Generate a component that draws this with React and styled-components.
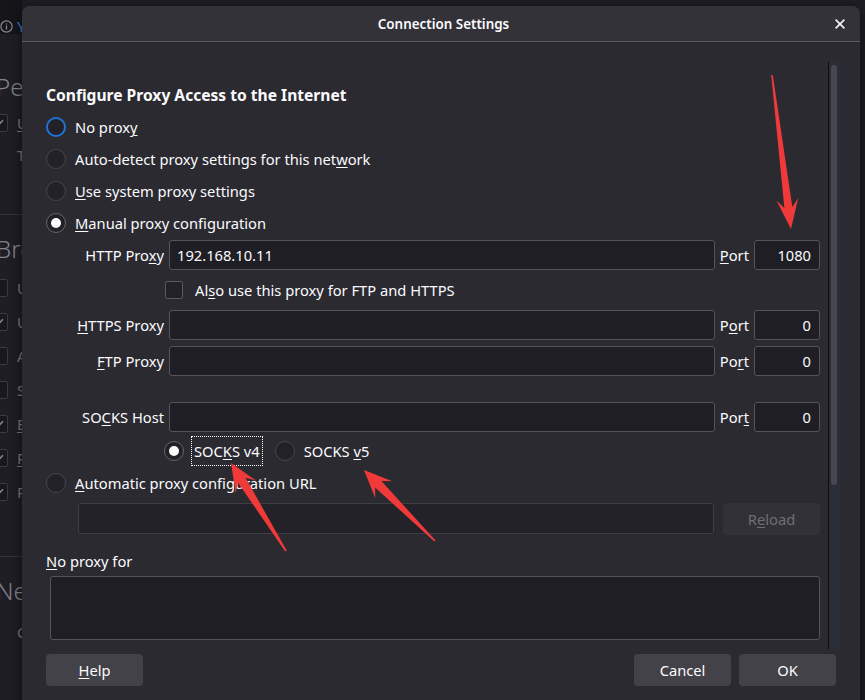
import React from "react";
import styled, { createGlobalStyle } from "styled-components";

const GlobalStyle = createGlobalStyle`
  html, body {
    margin: 0;
    padding: 0;
    background: #1c1b22;
  }
  body {
    font-family: "Noto Sans", "Open Sans", sans-serif;
    color: #fbfbfe;
    overflow: hidden;
  }
`;

const Screen = styled.div`
  position: relative;
  width: 865px;
  height: 700px;
  overflow: hidden;
  background: #1f1e24;
`;

/* ---- settings page behind the dialog (only its left edge shows) ---- */

const InfoBar = styled.div`
  width: 22px;
  height: 34px;
  box-sizing: border-box;
  padding-top: 18px;
  display: flex;
  align-items: center;
  gap: 4px;
  overflow: hidden;
  white-space: nowrap;
  background: #16151a;
  color: #3d7fd0;
  font-size: 15px;
  line-height: 16px;
`;

const Settings = styled.div`
  margin-left: -12px;
  width: 34px;
  overflow: hidden;
  white-space: nowrap;
  display: flex;
  flex-direction: column;
  color: #7a7980;
  font-size: 15px;
`;

const SectionTitle = styled.div`
  margin-top: ${(p) => p.$top}px;
  padding-left: 8px;
  font-size: 24px;
  font-weight: 300;
  line-height: 32px;
  color: #85848b;
`;

const PageCheck = styled.div`
  display: flex;
  align-items: center;
  gap: 9px;
  height: 34px;
  padding-left: 2px;
  margin-top: ${(p) => p.$top || 0}px;
`;

const PageBox = styled.span`
  flex: none;
  width: 18px;
  height: 18px;
  box-sizing: border-box;
  border: 1px solid #3b3a41;
  border-radius: 2px;
  background: #19181d;
  display: flex;
  align-items: center;
  justify-content: center;
`;

const PageNote = styled.div`
  margin-top: ${(p) => p.$top}px;
  padding-left: 29px;
  line-height: 22px;
`;

const Rule = styled.div`
  margin-top: ${(p) => p.$top}px;
  margin-left: 12px;
  height: 1px;
  background: #34333a;
`;

/* ---- dialog ---- */

const Dialog = styled.section`
  position: absolute;
  left: 22px;
  top: 6px;
  width: 838px;
  height: 712px;
  display: flex;
  flex-direction: column;
  background: #2b2a31;
  border-radius: 8px 8px 0 0;
  box-shadow: 0 2px 14px rgba(0, 0, 0, 0.55);
  overflow: hidden;
`;

const TitleBar = styled.header`
  flex: none;
  height: 35px;
  display: grid;
  grid-template-columns: 1fr auto 1fr;
  align-items: center;
  padding: 0 15px 0 20px;
  background: #333239;
  border-bottom: 1px solid #5b5a61;
  font-size: 13.4px;
  font-weight: 600;
`;

const Close = styled.span`
  justify-self: end;
  display: flex;
`;

const Body = styled.div`
  display: flex;
  padding: 20px 20px 0 24px;
`;

const Scroll = styled.div`
  flex: 1;
  height: 587px;
  display: flex;
  gap: 8px;
`;

const Content = styled.div`
  flex: 1;
  display: flex;
  flex-direction: column;
  padding-top: 22px;
  font-size: 14.7px;
`;

const Track = styled.div`
  width: 6px;
  border-left: 1px solid #0d0d10;
  background: #2a2c38;
  padding: 3px 3px 0 2px;
`;

const Thumb = styled.div`
  height: 420px;
  border-radius: 3px;
  background: #46474f;
`;

const Heading = styled.h2`
  margin: 0 0 5px;
  font-size: 15.6px;
  font-weight: 700;
  line-height: 22px;
`;

const RadioRow = styled.div`
  display: flex;
  align-items: center;
  gap: ${(p) => p.$gap || 0}px;
  height: ${(p) => p.$h || 32}px;
  margin-top: ${(p) => p.$top || 0}px;
  padding-left: ${(p) => p.$indent || 0}px;
`;

const Option = styled.label`
  display: inline-flex;
  align-items: center;
  gap: 8px;
`;

const RadioDot = styled.span`
  flex: none;
  width: 20px;
  height: 20px;
  box-sizing: border-box;
  border-radius: 50%;
  border: ${(p) =>
    p.$focus ? "2px solid #1f74d6" : p.$checked ? "1px solid #67666c" : "1px solid #47464d"};
  background: #222127;
  display: flex;
  align-items: center;
  justify-content: center;
  &::after {
    content: "";
    display: ${(p) => (p.$checked ? "block" : "none")};
    width: 10px;
    height: 10px;
    border-radius: 50%;
    background: #fbfbfe;
  }
`;

const Text = styled.span`
  padding: ${(p) => (p.$focus ? "3px 2px" : "0 1px")};
  line-height: 22px;
  white-space: nowrap;
  outline: ${(p) => (p.$focus ? "1px dotted #fbfbfe" : "none")};
`;

const Key = styled.span`
  text-decoration: underline;
  text-decoration-thickness: 1px;
  text-underline-offset: 2px;
`;

const ProxyBlock = styled.div`
  display: flex;
  flex-direction: column;
  margin: 1px 0 0 23px;
`;

const FieldRow = styled.div`
  display: grid;
  grid-template-columns: 95px 1fr auto 66px;
  column-gap: 5px;
  align-items: center;
  height: 30px;
  margin-top: ${(p) => p.$top || 0}px;
`;

const FieldLabel = styled.span`
  text-align: right;
  white-space: nowrap;
`;

const TextBox = styled.input`
  width: 100%;
  height: ${(p) => p.$h || 30}px;
  box-sizing: border-box;
  margin: 0;
  padding: 0 8px 0 7px;
  background: ${(p) => (p.disabled ? "#232228" : "#1f1e24")};
  border: 1px solid ${(p) => (p.disabled ? "#3f3e45" : "#55545b")};
  border-radius: 3px;
  color: #fbfbfe;
  font: 14.7px "Noto Sans", "Open Sans", sans-serif;
  text-align: ${(p) => p.$align || "left"};
  outline: none;
`;

const CheckRow = styled.label`
  display: flex;
  align-items: center;
  gap: 12px;
  height: 40px;
  padding-left: 96px;
`;

const CheckBox = styled.span`
  flex: none;
  width: 18px;
  height: 18px;
  box-sizing: border-box;
  border: 1px solid #5a5960;
  border-radius: 2px;
  background: #222127;
`;

const UrlRow = styled.div`
  display: flex;
  align-items: flex-start;
  gap: 9px;
  margin: 4px 0 0 32px;
`;

const Button = styled.button`
  flex: none;
  width: 97px;
  height: 32px;
  margin: 0;
  padding: 0;
  border: none;
  border-radius: 4px;
  background: ${(p) => (p.disabled ? "#323137" : "#434248")};
  color: ${(p) => (p.disabled ? "#6f6e74" : "#fbfbfe")};
  font: 14.7px "Noto Sans", "Open Sans", sans-serif;
  margin-left: ${(p) => (p.$push ? "auto" : "0")};
`;

const PlainLabel = styled.div`
  margin-top: 15px;
  line-height: 22px;
`;

const TextArea = styled.textarea`
  display: block;
  height: 64px;
  margin: 4px 0 0 4px;
  padding: 4px 7px;
  box-sizing: border-box;
  resize: none;
  background: #1f1e24;
  border: 1px solid #55545b;
  border-radius: 3px;
  color: #fbfbfe;
  font: 14.7px "Noto Sans", "Open Sans", sans-serif;
  outline: none;
`;

const Footer = styled.footer`
  display: flex;
  gap: 8px;
  padding: 5px 24px 0;
`;

const Overlay = styled.svg`
  position: absolute;
  left: 0;
  top: 0;
  pointer-events: none;
`;

function arrow(tail, tip, head = 26, half = 11, neck = 4, thin = 0.8) {
  const dx = tip[0] - tail[0];
  const dy = tip[1] - tail[1];
  const len = Math.hypot(dx, dy);
  const ux = dx / len;
  const uy = dy / len;
  const nx = -uy;
  const ny = ux;
  const bx = tip[0] - ux * head;
  const by = tip[1] - uy * head;
  const kx = tip[0] - ux * head * 0.72;
  const ky = tip[1] - uy * head * 0.72;
  const pts = [
    [tail[0] + nx * thin, tail[1] + ny * thin],
    [kx + nx * neck, ky + ny * neck],
    [bx + nx * half, by + ny * half],
    tip,
    [bx - nx * half, by - ny * half],
    [kx - nx * neck, ky - ny * neck],
    [tail[0] - nx * thin, tail[1] - ny * thin],
  ];
  return pts.map((p) => p.map((v) => v.toFixed(1)).join(",")).join(" ");
}

const Tick = () => (
  <svg width="12" height="12" viewBox="0 0 12 12">
    <path d="M2 6.5l2.6 2.6L10 3.2" fill="none" stroke="#8a898f" strokeWidth="1.5" />
  </svg>
);

const pageChecks = [
  { on: false, label: "Use autoscrolling" },
  { on: true, label: "Use smooth scrolling" },
  { on: false, label: "Always use the cursor keys to navigate within pages" },
  { on: false, label: "Search for text when you start typing" },
  { on: true, label: <><Key>E</Key>nable picture-in-picture video controls</> },
  { on: true, label: <><Key>R</Key>ecommend extensions as you browse</> },
  { on: true, label: "Recommend features as you browse" },
];

export default function App() {
  return (
    <Screen>
      <GlobalStyle />
      <InfoBar>
        <svg width="13" height="13" viewBox="0 0 13 13" style={{ flex: "none" }}>
          <circle cx="6.5" cy="6.5" r="5.6" fill="none" stroke="#8a898f" strokeWidth="1.2" />
          <path d="M6.5 5.6v4M6.5 3.4v1" stroke="#8a898f" strokeWidth="1.3" />
        </svg>
        <span>Your browser is being managed by your organization.</span>
      </InfoBar>
      <Settings>
        <SectionTitle $top={37}>Performance</SectionTitle>
        <PageCheck $top={3}>
          <PageBox>
            <Tick />
          </PageBox>
          <span>
            <Key>U</Key>se recommended performance settings
          </span>
        </PageCheck>
        <PageNote $top={4}>These settings are tailored to your computer’s hardware.</PageNote>
        <Rule $top={48} />
        <SectionTitle $top={18}>Browsing</SectionTitle>
        {pageChecks.map((c, i) => (
          <PageCheck key={i} $top={i === 0 ? 6 : 0}>
            <PageBox>{c.on && <Tick />}</PageBox>
            <span>{c.label}</span>
          </PageCheck>
        ))}
        <Rule $top={47} />
        <SectionTitle $top={18}>Network Settings</SectionTitle>
        <PageNote $top={14}>Configure how Firefox connects to the internet.</PageNote>
      </Settings>

      <Dialog>
        <TitleBar>
          <span />
          <span>Connection Settings</span>
          <Close>
            <svg width="10" height="10" viewBox="0 0 10 10">
              <path d="M0.6 0.6l8.8 8.8M9.4 0.6l-8.8 8.8" stroke="#fbfbfe" strokeWidth="1.5" />
            </svg>
          </Close>
        </TitleBar>

        <Body>
          <Scroll>
            <Content>
              <Heading>Configure Proxy Access to the Internet</Heading>
              <RadioRow $gap={8}>
                <RadioDot $focus />
                <Text>
                  No prox<Key>y</Key>
                </Text>
              </RadioRow>
              <RadioRow $gap={8}>
                <RadioDot />
                <Text>
                  Auto-detect proxy settings for this net<Key>w</Key>ork
                </Text>
              </RadioRow>
              <RadioRow $gap={8}>
                <RadioDot />
                <Text>
                  <Key>U</Key>se system proxy settings
                </Text>
              </RadioRow>
              <RadioRow $gap={8}>
                <RadioDot $checked />
                <Text>
                  <Key>M</Key>anual proxy configuration
                </Text>
              </RadioRow>

              <ProxyBlock>
                <FieldRow>
                  <FieldLabel>
                    HTTP Pro<Key>x</Key>y
                  </FieldLabel>
                  <TextBox defaultValue="192.168.10.11" readOnly />
                  <FieldLabel>
                    <Key>P</Key>ort
                  </FieldLabel>
                  <TextBox defaultValue="1080" $align="right" readOnly />
                </FieldRow>
                <CheckRow>
                  <CheckBox />
                  <span>
                    Al<Key>s</Key>o use this proxy for FTP and HTTPS
                  </span>
                </CheckRow>
                <FieldRow>
                  <FieldLabel>
                    <Key>H</Key>TTPS Proxy
                  </FieldLabel>
                  <TextBox defaultValue="" readOnly />
                  <FieldLabel>
                    P<Key>o</Key>rt
                  </FieldLabel>
                  <TextBox defaultValue="0" $align="right" readOnly />
                </FieldRow>
                <FieldRow $top={6}>
                  <FieldLabel>
                    <Key>F</Key>TP Proxy
                  </FieldLabel>
                  <TextBox defaultValue="" readOnly />
                  <FieldLabel>
                    Po<Key>r</Key>t
                  </FieldLabel>
                  <TextBox defaultValue="0" $align="right" readOnly />
                </FieldRow>
                <FieldRow $top={26}>
                  <FieldLabel>
                    SO<Key>C</Key>KS Host
                  </FieldLabel>
                  <TextBox defaultValue="" readOnly />
                  <FieldLabel>
                    Por<Key>t</Key>
                  </FieldLabel>
                  <TextBox defaultValue="0" $align="right" readOnly />
                </FieldRow>
                <RadioRow $h={30} $top={4} $indent={95} $gap={13}>
                  <Option>
                    <RadioDot $checked />
                    <Text $focus>
                      SOC<Key>K</Key>S v4
                    </Text>
                  </Option>
                  <Option>
                    <RadioDot />
                    <Text>
                      SOCKS <Key>v</Key>5
                    </Text>
                  </Option>
                </RadioRow>
              </ProxyBlock>

              <RadioRow $gap={8} $top={1}>
                <RadioDot />
                <Text>
                  <Key>A</Key>utomatic proxy configuration URL
                </Text>
              </RadioRow>
              <UrlRow>
                <TextBox defaultValue="" $h={31} disabled />
                <Button disabled>
                  R<Key>e</Key>load
                </Button>
              </UrlRow>

              <PlainLabel>
                <Key>N</Key>o proxy for
              </PlainLabel>
              <TextArea defaultValue="" readOnly />
            </Content>
            <Track>
              <Thumb />
            </Track>
          </Scroll>
        </Body>

        <Footer>
          <Button>
            <Key>H</Key>elp
          </Button>
          <Button $push>Cancel</Button>
          <Button>OK</Button>
        </Footer>
      </Dialog>

      <Overlay width="865" height="700" viewBox="0 0 865 700">
        <polygon points={arrow([772, 75], [791, 229], 30, 11, 4, 0.8)} fill="#f03a3a" />
        <polygon points={arrow([286, 551], [231, 463], 28, 12, 4.5, 0.8)} fill="#f03a3a" />
        <polygon points={arrow([435, 541], [364, 470], 28, 12, 4.5, 0.8)} fill="#f03a3a" />
      </Overlay>
    </Screen>
  );
}
